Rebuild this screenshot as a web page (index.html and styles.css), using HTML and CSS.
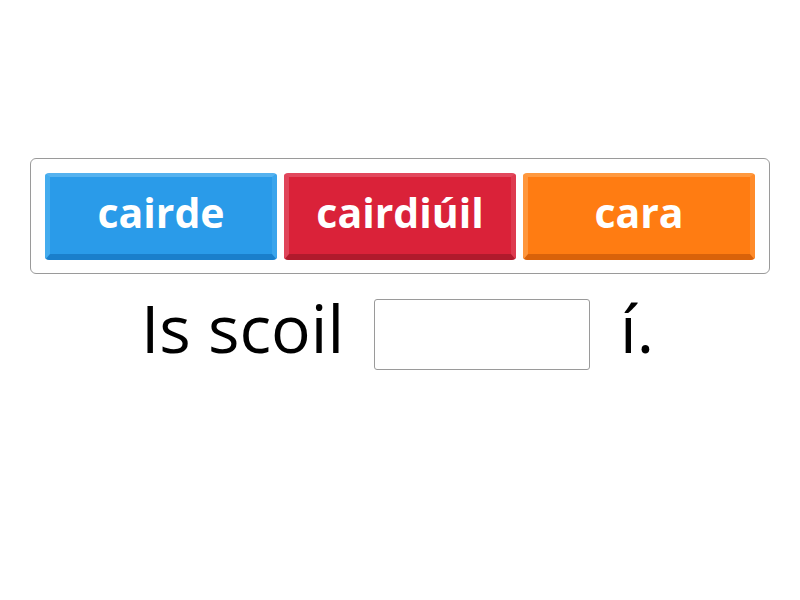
FILE: index.html
```html
<!DOCTYPE html>
<html>
<head>
<meta charset="utf-8">
<link rel="stylesheet" href="styles.css">
</head>
<body>
<main class="page">
  <div class="bank">
    <div class="tile tile-blue">cairde</div>
    <div class="tile tile-red">cairdiúil</div>
    <div class="tile tile-orange">cara</div>
  </div>
  <div class="sentence">
    <span class="word">Is scoil</span>
    <span class="blank"></span>
    <span class="word">í.</span>
  </div>
</main>
</body>
</html>
```
FILE: styles.css
```css
html, body {
  margin: 0;
  padding: 0;
  background: #fff;
}
body {
  font-family: "Open Sans", "Liberation Sans", sans-serif;
  width: 800px;
  height: 600px;
}
.page {
  padding: 158px 30px 0 30px;
}
.bank {
  display: flex;
  gap: 7px;
  padding: 14px 14px 13px 14px;
  border: 1px solid #9a9a9a;
  border-radius: 6px;
}
.tile {
  flex: 1;
  height: 71px;
  box-sizing: content-box;
  display: flex;
  align-items: center;
  justify-content: center;
  color: #fff;
  font-weight: 700;
  font-size: 41px;
  border-style: solid;
  border-width: 4px 5px 6px 5px;
  border-radius: 4px;
  line-height: 1;
  padding-bottom: 6px;
}
.tile-blue {
  background: #2a9be9;
  border-color: #55b2ef #3aa5ec #1a7fcb #44acee;
}
.tile-red {
  background: #da2239;
  border-color: #e2485d #de3a4f #b01a2c #e0455a;
}
.tile-orange {
  background: #ff7c12;
  border-color: #ff993f #ff8b2a #d9620a #ff963b;
}
.sentence {
  display: flex;
  align-items: flex-start;
  justify-content: center;
  margin-top: 25px;
  padding-right: 5px;
}
.word {
  font-size: 66px;
  color: #000;
  line-height: 72px;
  margin-top: -8px;
}
.blank {
  width: 214px;
  height: 69px;
  border: 1px solid #9a9a9a;
  border-radius: 3px;
  margin: 0 30px;
}
```
